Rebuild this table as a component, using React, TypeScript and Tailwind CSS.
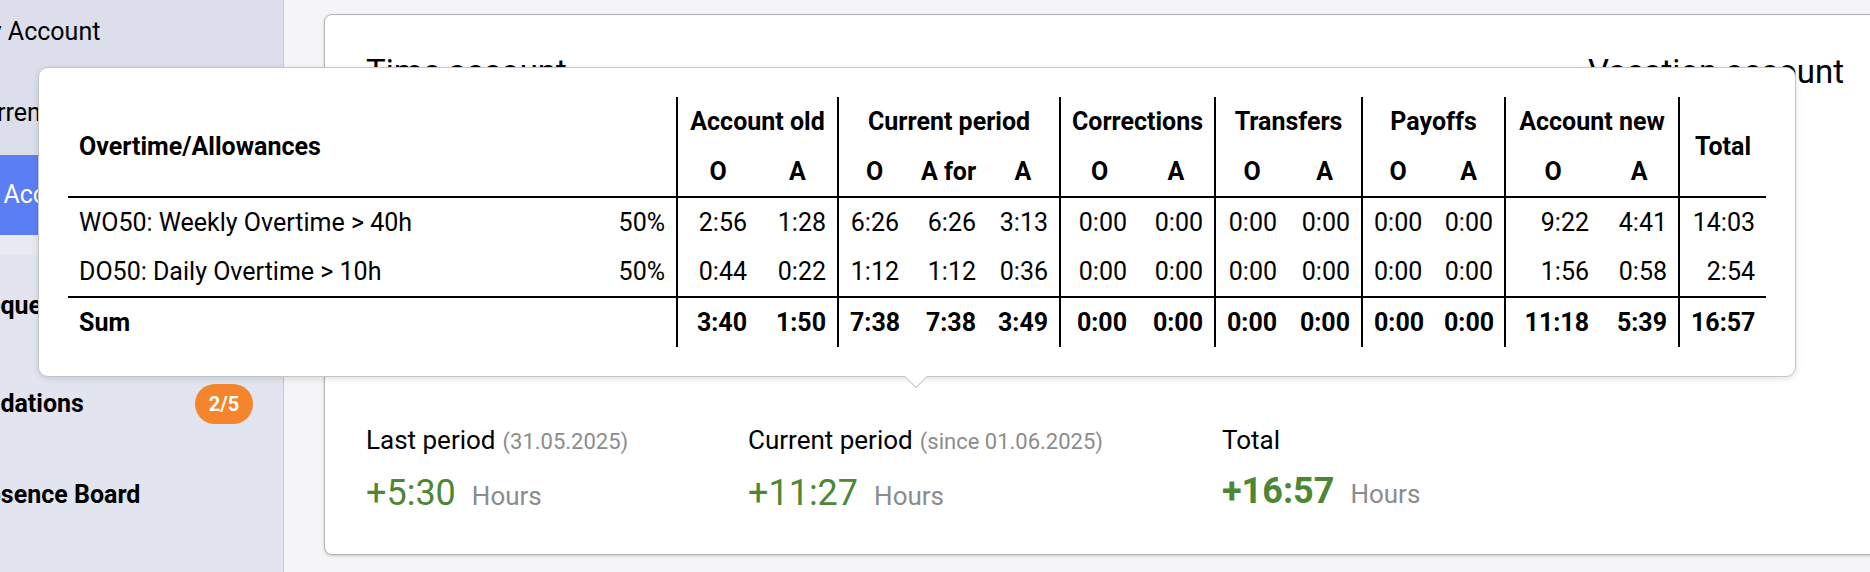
const rows = [
  {
    label: "WO50: Weekly Overtime > 40h",
    pct: "50%",
    v: ["2:56", "1:28", "6:26", "6:26", "3:13", "0:00", "0:00", "0:00", "0:00", "0:00", "0:00", "9:22", "4:41", "14:03"],
  },
  {
    label: "DO50: Daily Overtime > 10h",
    pct: "50%",
    v: ["0:44", "0:22", "1:12", "1:12", "0:36", "0:00", "0:00", "0:00", "0:00", "0:00", "0:00", "1:56", "0:58", "2:54"],
  },
];

const sums = ["3:40", "1:50", "7:38", "7:38", "3:49", "0:00", "0:00", "0:00", "0:00", "0:00", "0:00", "11:18", "5:39", "16:57"];

// value columns that start a new group get the vertical rule
const groupStart = [0, 2, 5, 7, 9, 11, 13];

function ValueCells({ values }: { values: string[] }) {
  return (
    <>
      {values.map((val, i) => (
        <td
          key={i}
          className={`px-[11px] text-right ${groupStart.includes(i) ? "border-l-2 border-black" : ""}`}
        >
          {val}
        </td>
      ))}
    </>
  );
}

function OvertimeTooltip() {
  return (
    <div className="absolute left-[38px] top-[67px] w-[1758px] rounded-[10px] border border-[#c6c6c6] bg-white p-[29px] shadow-[0_2px_6px_rgba(0,0,0,0.12)]">
      <table className="w-[1698px] table-fixed border-collapse text-[25px] text-black">
        <colgroup>
          <col className="w-[519px]" />
          <col className="w-[90px]" />
          <col className="w-[81px]" />
          <col className="w-[80px]" />
          <col className="w-[72px]" />
          <col className="w-[77px]" />
          <col className="w-[73px]" />
          <col className="w-[78px]" />
          <col className="w-[77px]" />
          <col className="w-[73px]" />
          <col className="w-[74px]" />
          <col className="w-[71px]" />
          <col className="w-[72px]" />
          <col className="w-[95px]" />
          <col className="w-[79px]" />
          <col className="w-[87px]" />
        </colgroup>
        <thead className="border-b-2 border-black font-bold">
          <tr className="h-[50px]">
            <th colSpan={2} rowSpan={2} className="px-[11px] text-left">
              Overtime/Allowances
            </th>
            <th colSpan={2} className="border-l-2 border-black text-center">Account old</th>
            <th colSpan={3} className="border-l-2 border-black text-center">Current period</th>
            <th colSpan={2} className="border-l-2 border-black text-center">Corrections</th>
            <th colSpan={2} className="border-l-2 border-black text-center">Transfers</th>
            <th colSpan={2} className="border-l-2 border-black text-center">Payoffs</th>
            <th colSpan={2} className="border-l-2 border-black text-center">Account new</th>
            <th rowSpan={2} className="border-l-2 border-black text-center">Total</th>
          </tr>
          <tr className="h-[50px]">
            <th className="border-l-2 border-black text-center">O</th>
            <th className="text-center">A</th>
            <th className="border-l-2 border-black text-center">O</th>
            <th className="text-center">A for</th>
            <th className="text-center">A</th>
            <th className="border-l-2 border-black text-center">O</th>
            <th className="text-center">A</th>
            <th className="border-l-2 border-black text-center">O</th>
            <th className="text-center">A</th>
            <th className="border-l-2 border-black text-center">O</th>
            <th className="text-center">A</th>
            <th className="border-l-2 border-black text-center">O</th>
            <th className="text-center">A</th>
          </tr>
        </thead>
        <tbody>
          {rows.map((r) => (
            <tr key={r.label} className="h-[50px]">
              <td className="px-[11px] text-left whitespace-nowrap">{r.label}</td>
              <td className="px-[11px] text-right">{r.pct}</td>
              <ValueCells values={r.v} />
            </tr>
          ))}
          <tr className="h-[50px] border-t-2 border-black font-bold">
            <td className="px-[11px] text-left">Sum</td>
            <td />
            <ValueCells values={sums} />
          </tr>
        </tbody>
      </table>
      <div className="absolute -bottom-[9px] left-[869px] h-[16px] w-[16px] rotate-45 border-b border-r border-[#c6c6c6] bg-white" />
    </div>
  );
}

function Stat({ label, hint, value, bold }: { label: string; hint?: string; value: string; bold?: boolean }) {
  return (
    <div>
      <div className="flex items-baseline leading-[30px]">
        <span className="text-[26px] text-black">{label}</span>
        {hint && <span className="ml-[7px] text-[22px] text-[#8c8c8c]">{hint}</span>}
      </div>
      <div className="mt-[14px] flex items-baseline leading-[44px]">
        <span className={`text-[36px] text-[#4d8734] ${bold ? "font-bold" : ""}`}>{value}</span>
        <span className="ml-[16px] text-[26px] text-[#8c8c8c]">Hours</span>
      </div>
    </div>
  );
}

export default function App() {
  return (
    <div className="relative flex h-[572px] w-[1870px] overflow-hidden bg-[#f5f5f7] font-[family-name:Roboto,sans-serif]">
      <aside className="w-[284px] shrink-0 overflow-hidden border-r border-[#c8c8cc] bg-[#e2e4ef] text-[25px] text-black">
        <div className="bg-[#dcdfeb]">
          <div className="flex h-[64px] items-center whitespace-nowrap">
            <span className="-ml-[32px]">My Account</span>
          </div>
          <div className="flex h-[91px] items-center whitespace-nowrap pt-[7px]">
            <span className="-ml-[33px]">Current Period</span>
          </div>
          <div className="flex h-[80px] items-center whitespace-nowrap bg-[#5b7ef5] text-white">
            <span className="-ml-[59px]">Time Account</span>
          </div>
        </div>
        <div className="h-[20px] bg-[#e8e9f1]" />
        <div className="flex h-[102px] items-center whitespace-nowrap font-bold">
          <span className="-ml-[29px]">Requests</span>
        </div>
        <div className="flex h-[94px] items-center justify-between whitespace-nowrap pr-[30px] font-bold">
          <span className="-ml-[42px]">Validations</span>
          <span className="flex h-[40px] w-[58px] items-center justify-center rounded-full bg-[#f5852c] text-[20px] text-white">
            2/5
          </span>
        </div>
        <div className="flex h-[88px] items-center whitespace-nowrap font-bold">
          <span className="-ml-[30px]">Absence Board</span>
        </div>
      </aside>

      <main className="flex-1 pl-[40px] pt-[14px]">
        <div className="h-[541px] w-[1562px] shrink-0 rounded-[8px] border border-[#b4b4b4] bg-white px-[41px] pt-[37px] shadow-[0_1px_3px_rgba(0,0,0,0.18)]">
          <div className="flex justify-between text-[33px] leading-[40px] text-black">
            <h2>Time account</h2>
            <h2>Vacation account</h2>
          </div>
          <div className="mt-[333px] flex">
            <div className="w-[382px]">
              <Stat label="Last period" hint="(31.05.2025)" value="+5:30" />
            </div>
            <div className="w-[474px]">
              <Stat label="Current period" hint="(since 01.06.2025)" value="+11:27" />
            </div>
            <div>
              <Stat label="Total" value="+16:57" bold />
            </div>
          </div>
        </div>
      </main>

      <OvertimeTooltip />
    </div>
  );
}
